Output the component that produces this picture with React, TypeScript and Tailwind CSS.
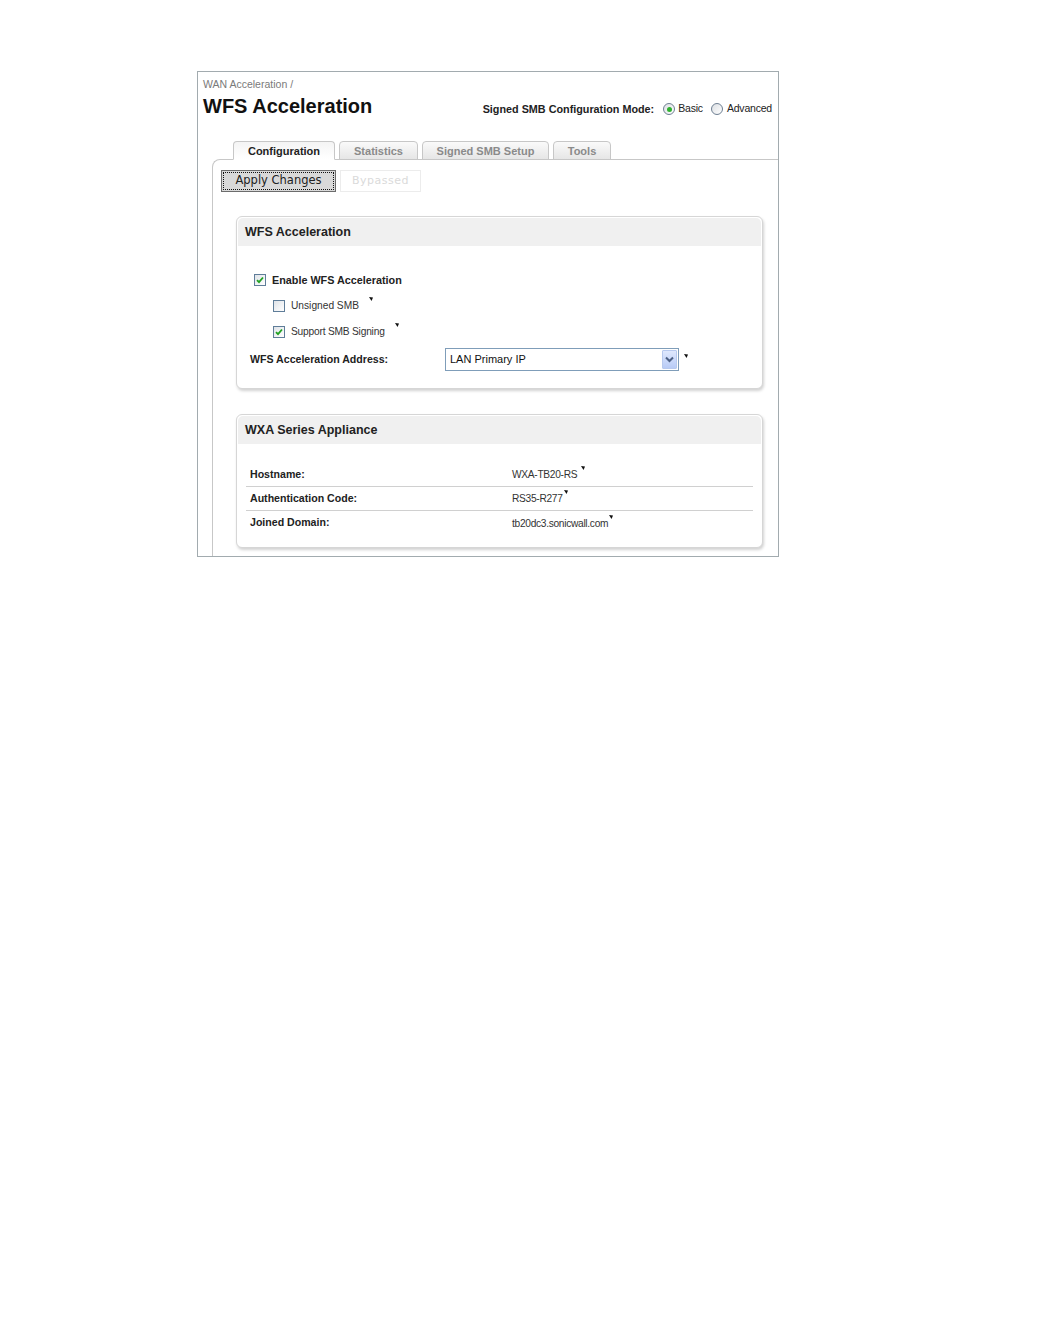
import React from 'react';

const SANS = 'font-["Liberation_Sans",Arial,sans-serif]';

function Marker({ className = '' }: { className?: string }) {
  return (
    <svg width="5" height="5" viewBox="0 0 5 5" className={`block flex-shrink-0 ${className}`}>
      <polygon points="0,0 4,0.5 2.5,4" fill="#111" />
    </svg>
  );
}

function CheckBox({ checked }: { checked: boolean }) {
  return (
    <span className="flex h-[12px] w-[12px] flex-shrink-0 items-center justify-center border border-[#5f7d99] bg-gradient-to-br from-[#dfe3e8] to-[#ffffff]">
      {checked && (
        <svg width="8" height="8" viewBox="0 0 8 8">
          <path d="M1 4.2 L3 6.2 L7 1.5" stroke="#21a121" strokeWidth="1.8" fill="none" />
        </svg>
      )}
    </span>
  );
}

function Radio({ checked }: { checked: boolean }) {
  return (
    <span className="flex h-[12px] w-[12px] items-center justify-center rounded-full border border-[#6e7f92] bg-gradient-to-br from-[#dcdfe3] to-white">
      {checked && <span className="h-[5px] w-[5px] rounded-full bg-[#2fb12f]" />}
    </span>
  );
}

function Panel({ title, children }: { title: string; children: React.ReactNode }) {
  return (
    <div className="w-[527px] rounded-[6px] border border-[#d6d6d6] bg-white shadow-[1px_2px_3px_rgba(0,0,0,0.18)]">
      <div className="mx-[1px] mt-[1px] flex h-[28px] items-center rounded-t-[5px] bg-[#f0f0f0] pl-[7px]">
        <h2 className={`${SANS} text-[12.5px] font-bold text-[#222]`}>{title}</h2>
      </div>
      {children}
    </div>
  );
}

const tabs = [
  { label: 'Configuration', w: 'w-[102px]', active: true },
  { label: 'Statistics', w: 'w-[79px]', active: false },
  { label: 'Signed SMB Setup', w: 'w-[127px]', active: false },
  { label: 'Tools', w: 'w-[58px]', active: false },
];

const rows = [
  { label: 'Hostname:', value: 'WXA-TB20-RS', gap: true },
  { label: 'Authentication Code:', value: 'RS35-R277', gap: false },
  { label: 'Joined Domain:', value: 'tb20dc3.sonicwall.com', gap: false },
];

export default function App() {
  return (
    <div className={`min-h-[1332px] bg-white pl-[197px] pt-[71px] ${SANS}`}>
      <div className="flex h-[486px] w-[582px] flex-col border border-[#a2abaf]">
        <div className="flex items-start justify-between pl-[5px] pr-[6px] pt-[5px]">
          <div>
            <p className="text-[10.5px] leading-[14px] text-[#7a7a7a]">WAN Acceleration /</p>
            <h1 className="mt-[3px] text-[20px] font-bold leading-[24px] text-[#111]">WFS Acceleration</h1>
          </div>
          <div className="mt-[24px] flex items-center text-[#222]">
            <span className="text-[10.8px] font-bold">Signed SMB Configuration Mode:</span>
            <span className="ml-[9px]"><Radio checked /></span>
            <span className="ml-[3px] text-[10.5px] tracking-[-0.2px]">Basic</span>
            <span className="ml-[8px]"><Radio checked={false} /></span>
            <span className="ml-[4px] text-[10.5px] tracking-[-0.2px]">Advanced</span>
          </div>
        </div>

        <div className="mt-[23px] flex gap-[4px] pl-[35px]">
          {tabs.map((t) => (
            <div
              key={t.label}
              className={`${t.w} relative z-10 -mb-px flex h-[19px] items-center justify-center rounded-t-[4px] border border-[#c7c7c7] pt-[1px] text-[11px] font-bold ${
                t.active
                  ? 'border-b-white bg-gradient-to-b from-[#f4f4f4] to-white text-[#222]'
                  : 'bg-gradient-to-b from-[#fafafa] to-[#e6e6e6] text-[#8a8a8a]'
              }`}
            >
              {t.label}
            </div>
          ))}
        </div>

        <div className="ml-[14px] flex-1 rounded-tl-[8px] border-l border-t border-[#c7c7c7] pl-[8px] pt-[10px]">
          <div className="flex gap-[4px]">
            <button className="flex h-[22px] w-[115px] items-center justify-center border border-[#6c6c6c] bg-[#d9d9d9] p-[1px]">
              <span className='flex h-full w-full items-center justify-center border border-dotted border-[#111] font-["DejaVu_Sans",sans-serif] text-[11.5px] text-[#222]'>
                Apply Changes
              </span>
            </button>
            <button className='flex h-[22px] w-[81px] items-center justify-center border border-[#ececec] bg-white font-["DejaVu_Sans",sans-serif] text-[11px] tracking-[0.5px] text-[#dadada]'>
              Bypassed
            </button>
          </div>

          <div className="ml-[15px] mt-[24px] flex flex-col gap-[25px]">
            <Panel title="WFS Acceleration">
              <div className="pb-[17px] pl-[17px] pt-[26px] text-[#222]">
                <label className="flex items-center gap-[6px]">
                  <CheckBox checked />
                  <span className="text-[10.8px] font-bold">Enable WFS Acceleration</span>
                </label>
                <label className="ml-[19px] mt-[9px] flex items-center gap-[6px]">
                  <CheckBox checked={false} />
                  <span className="text-[10.2px] text-[#333]">Unsigned SMB</span>
                  <Marker className="mb-[12px] ml-[4px]" />
                </label>
                <label className="ml-[19px] mt-[9px] flex items-center gap-[6px]">
                  <CheckBox checked />
                  <span className="text-[10.2px] tracking-[-0.2px] text-[#333]">Support SMB Signing</span>
                  <Marker className="mb-[12px] ml-[4px]" />
                </label>
                <div className="mt-[8px] flex items-center">
                  <span className="-ml-[4px] w-[195px] text-[10.6px] font-bold">WFS Acceleration Address:</span>
                  <div className="flex h-[23px] w-[234px] items-center justify-between border border-[#7f9db9] bg-white pl-[4px] pr-[1px]">
                    <span className="text-[11px] text-[#111]">LAN Primary IP</span>
                    <span className="flex h-[19px] w-[15px] items-center justify-center rounded-[1px] border border-[#b7c9ee] bg-gradient-to-b from-[#dfe8fd] to-[#b8cbf6]">
                      <svg width="9" height="7" viewBox="0 0 9 7">
                        <path d="M1 1.5 L4.5 5 L8 1.5" stroke="#4d6185" strokeWidth="2" fill="none" />
                      </svg>
                    </span>
                  </div>
                  <Marker className="mb-[6px] ml-[5px]" />
                </div>
              </div>
            </Panel>

            <Panel title="WXA Series Appliance">
              <div className="px-[9px] pb-[12px] pt-[19px] text-[#222]">
                {rows.map((r, i) => (
                  <div
                    key={r.label}
                    className={`flex h-[24px] items-center ${i < rows.length - 1 ? 'border-b border-[#d0d0d0]' : ''}`}
                  >
                    <span className="w-[266px] pl-[4px] text-[10.6px] font-bold">{r.label}</span>
                    <span className="text-[10.2px] tracking-[-0.3px] text-[#333]">{r.value}</span>
                    <Marker className={`mb-[12px] ${r.gap ? 'ml-[4px]' : 'ml-[1px]'}`} />
                  </div>
                ))}
              </div>
            </Panel>
          </div>
        </div>
      </div>
    </div>
  );
}
